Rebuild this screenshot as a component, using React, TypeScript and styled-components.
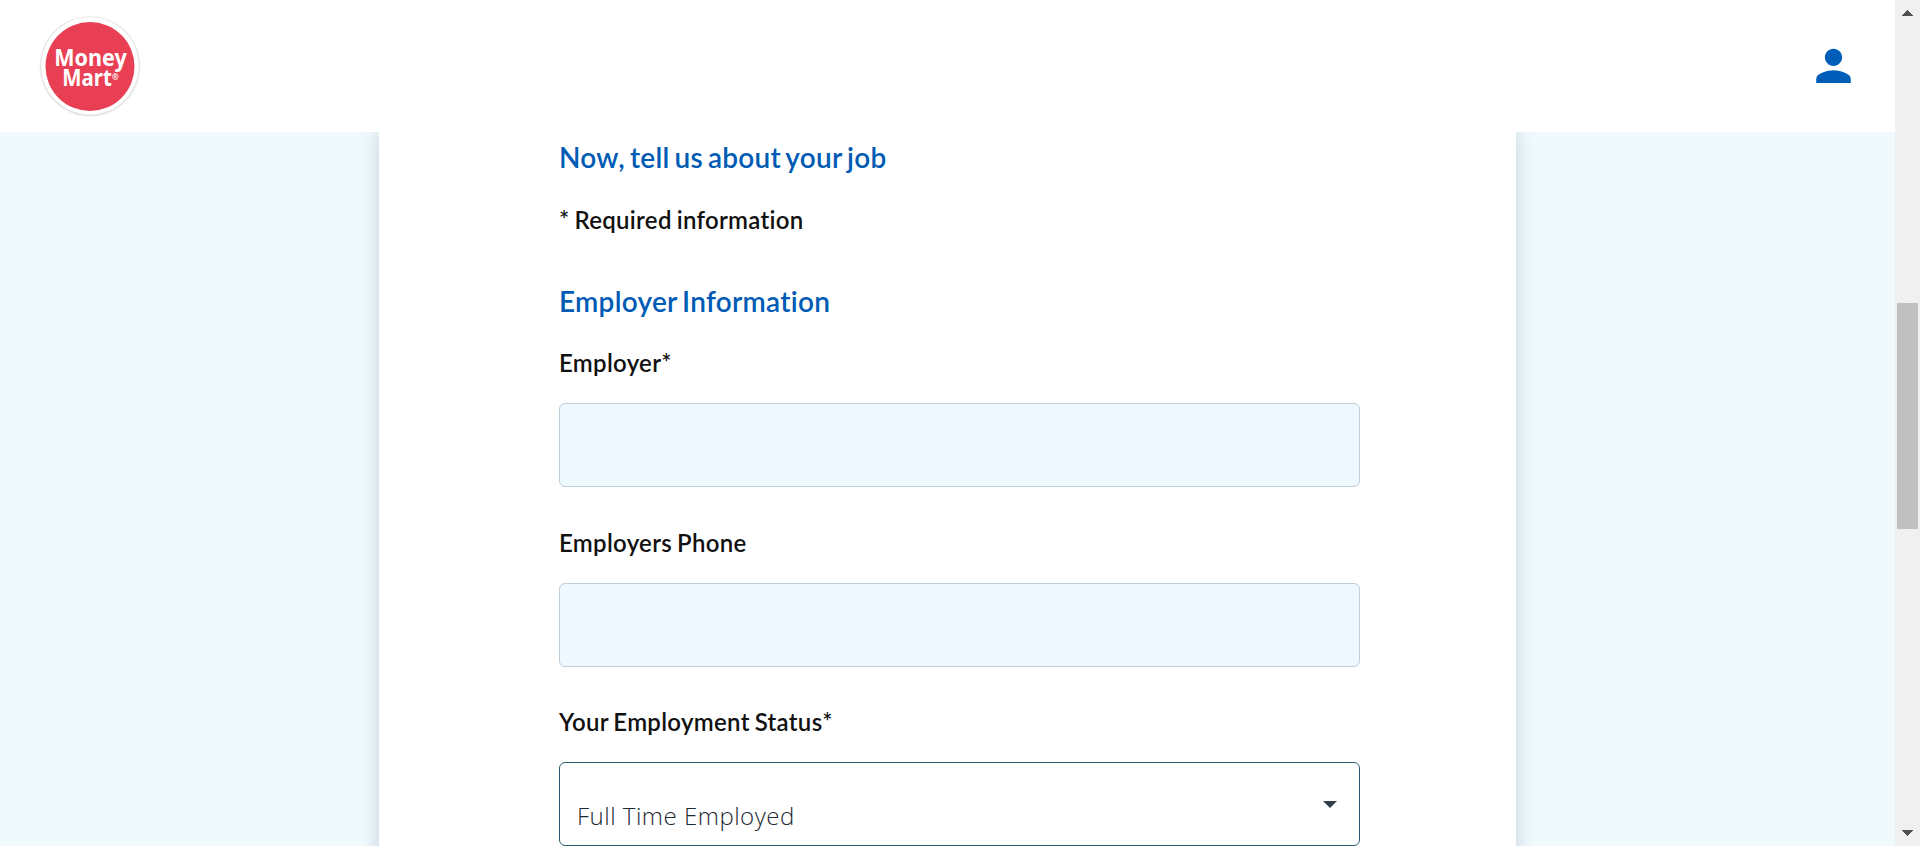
import React from "react";
import styled, { createGlobalStyle } from "styled-components";

const GlobalStyle = createGlobalStyle`
  *, *::before, *::after { box-sizing: border-box; }
  html, body { margin: 0; padding: 0; overflow: hidden; }
  body {
    font-family: Lato, "Liberation Sans", sans-serif;
    font-variant-ligatures: none;
    letter-spacing: 0.3px;
    word-spacing: -1.3px;
    color: #111;
    background: #fff;
  }
`;

const Window = styled.div`
  display: flex;
  width: 1920px;
  height: 846px;
  overflow: hidden;
`;

const Page = styled.div`
  display: flex;
  flex-direction: column;
  width: 1895px;
`;

const Header = styled.header`
  display: flex;
  align-items: center;
  justify-content: space-between;
  flex: none;
  height: 132px;
  padding: 0 44px 0 40px;
  background: #fff;
`;

const LogoSvg = styled.svg`
  display: block;
  width: 100px;
  height: 104px;
  overflow: visible;
  letter-spacing: 0;
`;

const UserIcon = styled.svg`
  display: block;
  width: 35px;
  height: 35px;
  margin-top: -1px;
  fill: #005eb8;
`;

const Body = styled.main`
  display: flex;
  flex: 1;
  min-height: 0;
  padding-left: 379px;
  overflow: hidden;
  background: #f0f9fc;
`;

const Card = styled.section`
  width: 1137px;
  height: 900px;
  padding: 5px 156px 0 180px;
  background: #fff;
  box-shadow: 0 0 18px rgba(0, 60, 95, 0.2);
  clip-path: inset(0 -40px);
`;

const Title = styled.h2<{ $gap: number }>`
  margin: 0 0 ${(p) => p.$gap}px;
  font-size: 28px;
  font-weight: 600;
  line-height: 40px;
  letter-spacing: 0.27px;
  word-spacing: -2.3px;
  color: #005bb5;
`;

const Note = styled.p`
  margin: 0 0 43px;
  font-size: 24px;
  font-weight: 600;
  line-height: 36px;
`;

const Field = styled.div<{ $gap: number }>`
  display: flex;
  flex-direction: column;
  margin-bottom: ${(p) => p.$gap}px;
`;

const Label = styled.label`
  margin-bottom: 22px;
  font-size: 24px;
  font-weight: 600;
  line-height: 36px;
`;

const Input = styled.input`
  width: 801px;
  height: 84px;
  margin: 0;
  padding: 0 18px;
  border: 1px solid #bfced8;
  border-radius: 6px;
  outline: none;
  background: #edf8ff;
`;

const Select = styled.div`
  display: flex;
  justify-content: space-between;
  width: 801px;
  height: 84px;
  padding: 34px 22px 0 17px;
  border: 1px solid #2c5d75;
  border-radius: 6px;
  background: #fff;
  font-family: "Open Sans", "Noto Sans", sans-serif;
  font-size: 24px;
  font-weight: 340;
  line-height: 38px;
  letter-spacing: 0.5px;
  word-spacing: 0;
  color: #1d2931;
`;

const Caret = styled.svg`
  display: block;
  width: 14px;
  height: 7px;
  margin-top: 4px;
  fill: #333f48;
`;

const Scrollbar = styled.div`
  display: flex;
  flex-direction: column;
  align-items: center;
  width: 25px;
  padding: 10px 0;
  background: #f0f0f0;
`;

const Thumb = styled.div`
  width: 21px;
  height: 226px;
  margin: 287px 0 auto;
  background: #c0c0c0;
`;

const Arrow = styled.svg`
  display: block;
  width: 11px;
  height: 6px;
  fill: #505050;
`;

function Logo() {
  return (
    <LogoSvg viewBox="0 0 100 104" role="img" aria-label="Money Mart">
      <circle cx="50" cy="52.3" r="50.6" fill="#f6f6f6" />
      <circle cx="50" cy="52.3" r="49.9" fill="#e6e6e6" />
      <circle cx="50" cy="51.9" r="48.6" fill="#fff" />
      <circle cx="50" cy="52.5" r="44.5" fill="#e93f54" />
      <g fill="#fff" fontFamily="Noto Sans, sans-serif" fontWeight="700">
        <text x="14.3" y="51.6" fontSize="22.5" textLength="72.5" lengthAdjust="spacingAndGlyphs">Money</text>
        <text x="22.3" y="71.5" fontSize="22.5" textLength="49.5" lengthAdjust="spacingAndGlyphs">Mart</text>
        <text x="72" y="66" fontSize="8">®</text>
      </g>
    </LogoSvg>
  );
}

export default function App() {
  return (
    <>
      <GlobalStyle />
      <Window>
        <Page>
          <Header>
            <Logo />
            <UserIcon viewBox="3.9 3.7 16.2 16.2">
              <path d="M12 12c2.21 0 4-1.79 4-4s-1.79-4-4-4-4 1.79-4 4 1.79 4 4 4zm0 2c-2.67 0-8 1.34-8 4v2h16v-2c0-2.66-5.33-4-8-4z" />
            </UserIcon>
          </Header>
          <Body>
            <Card>
              <Title $gap={25}>Now, tell us about your job</Title>
              <Note>* Required information</Note>
              <Title $gap={24}>Employer Information</Title>
              <Field $gap={38}>
                <Label htmlFor="employer">Employer*</Label>
                <Input id="employer" />
              </Field>
              <Field $gap={37}>
                <Label htmlFor="phone">Employers Phone</Label>
                <Input id="phone" />
              </Field>
              <Field $gap={38}>
                <Label>Your Employment Status*</Label>
                <Select>
                  <span>Full Time Employed</span>
                  <Caret viewBox="0 0 14 7"><path d="M0 0h14L7 7z" /></Caret>
                </Select>
              </Field>
            </Card>
          </Body>
        </Page>
        <Scrollbar>
          <Arrow viewBox="0 0 11 6" shapeRendering="crispEdges"><path d="M5.5 0L11 6H0z" /></Arrow>
          <Thumb />
          <Arrow viewBox="0 0 11 6" shapeRendering="crispEdges"><path d="M0 0h11L5.5 6z" /></Arrow>
        </Scrollbar>
      </Window>
    </>
  );
}
